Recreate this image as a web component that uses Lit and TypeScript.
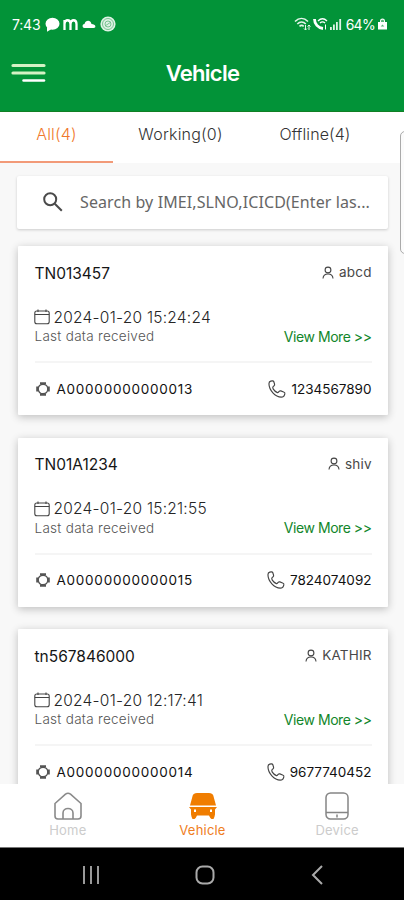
import { LitElement, html, css, svg } from "lit";
import { customElement, property } from "lit/decorators.js";

interface Vehicle {
  plate: string;
  owner: string;
  time: string;
  imei: string;
  phone: string;
}

const vehicles: Vehicle[] = [
  { plate: "TN013457", owner: "abcd", time: "2024-01-20 15:24:24", imei: "A00000000000013", phone: "1234567890" },
  { plate: "TN01A1234", owner: "shiv", time: "2024-01-20 15:21:55", imei: "A00000000000015", phone: "7824074092" },
  { plate: "tn567846000", owner: "KATHIR", time: "2024-01-20 12:17:41", imei: "A00000000000014", phone: "9677740452" },
];

const phonePath = svg`<path d="M2.600 1.100 4 .8c.8-.1 1.300.2 1.500.9l.7 2.200c.2.700 0 1.200-.5 1.600l-.9.8C4.200 7 4.500 7.800 5 8.600c.9 1.400 2 2.400 3.500 3.100.6.300 1 .2 1.400-.3l.6-.7c.5-.5 1-.6 1.600-.4l2.700 1c.9.300 1.300.9 1.100 1.700l-.3 1c-.4 1.400-1.500 2.200-3 2.200C6.800 16 1 9.800 .9 3.600c0-1.300.6-2.200 1.700-2.500z"/>`;

@customElement("vehicle-card")
export class VehicleCard extends LitElement {
  @property({ attribute: false }) vehicle!: Vehicle;

  static styles = css`
    :host {
      display: flex;
      flex-direction: column;
      box-sizing: border-box;
      flex: none;
      height: 169px;
      padding: 15px 16.500px 0 17px;
      background: #fff;
      border-radius: 1px;
      box-shadow: 0 2px 8px rgba(0, 0, 0, 0.24);
      font-family: Inter, "Liberation Sans", sans-serif;
      color: #252525;
      white-space: nowrap;
    }
    svg { fill: none; stroke: #444; stroke-width: 1.1; display: block; flex: none; }
    .row { display: flex; align-items: center; justify-content: space-between; }
    .group { display: flex; align-items: center; }
    .head { height: 24px; }
    .plate { font-size: 15.500px; color: #151515; }
    .owner { font-size: 13.500px; gap: 5px; color: #484848; margin-top: -2px; }
    .owner-name { letter-spacing: 0.2px; margin-right: -0.2px; }
    .when { height: 20px; margin-top: 22px; gap: 4px; font-size: 15.500px; font-weight: 300; }
    .when svg { margin-left: -1px; }
    .time { letter-spacing: 0.240px; }
    .info { height: 20px; margin-top: -1px; }
    .note { font-size: 13.500px; letter-spacing: 0.280px; font-weight: 300; color: #555; }
    .more { font-size: 14px; letter-spacing: -0.450px; color: #12862a; }
    .foot { border-top: 2px solid #f5f5f5; margin-top: 15px; padding-top: 14px; height: 23px; }
    .imei { gap: 6px; font-size: 13.500px; color: #111; }
    .imei svg { margin-right: 0; stroke: #555; }
    .imei-text { letter-spacing: 0.750px; }
    .phone { gap: 5px; font-size: 13.500px; color: #111; }
  `;

  render() {
    const v = this.vehicle;
    return html`
      <div class="row head">
        <span class="plate">${v.plate}</span>
        <span class="group owner">
          <svg width="12" height="13" viewBox="0 0 12 13"><circle cx="6" cy="4" r="2.900"/><path d="M1 12.500C1.200 9.500 3.500 8 6 8s4.800 1.500 5 4.500"/></svg>
          <span class="owner-name">${v.owner}</span>
        </span>
      </div>
      <div class="group when">
        <svg width="16" height="16" viewBox="0 0 16 16"><rect x=".8" y="2" width="14.400" height="12.800" rx="2"/><path d="M.8 5.500h14.400M4 .5V3M12 .5V3"/></svg>
        <span class="time">${v.time}</span>
      </div>
      <div class="row info"><span class="note">Last data received</span><span class="more">View More &gt;&gt;</span></div>
      <div class="row foot">
        <span class="group imei">
          <svg width="16" height="16" viewBox="0 0 16 16"><circle cx="8" cy="8" r="4.800" stroke-width="1.400"/><path stroke-width="2" d="M5 2.300h6M5 13.700h6M2.200 5.500v5M13.800 5.500v5"/></svg>
          <span class="imei-text">${v.imei}</span>
        </span>
        <span class="group phone">
          <svg width="18" height="18" viewBox="0 0 17 17">${phonePath}</svg>
          <span class="phone-text">${v.phone}</span>
        </span>
      </div>`;
  }
}

@customElement("app-root")
export class AppRoot extends LitElement {
  static styles = css`
    :host {
      display: flex;
      flex-direction: column;
      width: 404px;
      height: 900px;
      overflow: hidden;
      position: relative;
      background: #f8f8f8;
      font-family: Inter, "Liberation Sans", sans-serif;
      white-space: nowrap;
    }
    svg { display: block; flex: none; }
    .top { height: 112px; box-sizing: border-box; background: #029338; border-bottom: 1px solid #118024; color: #fff; flex: none; }
    .status { display: flex; align-items: center; justify-content: space-between; height: 24px; padding: 12px 17px 0 12px; font-size: 14px; }
    .left, .right { display: flex; align-items: center; }
    .clock { letter-spacing: -0.2px; margin-right: 2px; }
    .left { gap: 3px; }
    .right { gap: 2px; }
    .battery { letter-spacing: -0.7px; margin-left: 2px; margin-right: 1px; }
    .bar { display: grid; grid-template-columns: 60px 1fr 60px; align-items: center; height: 74px; }
    .menu { margin-left: 11px; }
    .title { margin: 0 0 0 1px; text-align: center; font-size: 22px; font-weight: 600; letter-spacing: -0.7px; }
    .tabs { display: flex; height: 51px; background: #fff; flex: none; font-size: 16px; font-weight: 300; color: #333; }
    .tab { box-sizing: border-box; width: 135px; height: 51px; padding-top: 12px; text-align: center; letter-spacing: 0.2px; }
    .tab:last-child { letter-spacing: 0.1px; width: 134px; }
    .tab.on { width: 113px; border-bottom: 2.500px solid #f29a78; color: #f0782c; }
    .search { display: flex; align-items: center; gap: 16px; box-sizing: border-box; margin: 13px 16px 17px 17px; padding-left: 25px; height: 53px; flex: none; background: #fff; border-radius: 2px; box-shadow: 0 1px 3px rgba(0, 0, 0, 0.18); font: 16px "Noto Sans", sans-serif; color: #666; }
    .query { letter-spacing: 0.1px; margin-top: -1px; }
    .search svg { margin-top: -2px; }
    .list { display: flex; flex-direction: column; gap: 22.600px; flex: 1; min-height: 0; padding: 17px 16px 0 17.500px; margin-top: -17px; overflow: hidden; }
    .nav { display: flex; justify-content: space-around; height: 63px; flex: none; background: #fff; font-size: 13px; color: #ccc; position: relative; }
    .item { display: flex; flex-direction: column; align-items: center; width: 134.600px; padding: 8px 0 0 1px; gap: 2px; letter-spacing: 0.2px; }
    .item.on { color: #ef7d22; }
    .keys { height: 53px; flex: none; background: #000; border-top: 1px solid #777; box-sizing: border-box; display: flex; align-items: center; justify-content: space-between; padding: 2px 80px 0 79px; }
    .round { margin-right: 3px; }
    .handle { position: absolute; left: 400px; top: 131px; width: 12px; height: 121px; border: 1px solid #aaa; border-radius: 5px; background: #fbfbfb; }
  `;

  render() {
    return html`
      <header class="top">
        <div class="status">
          <div class="left">
            <span class="clock">7:43</span>
            <svg width="15" height="15" viewBox="0 0 15 15" fill="#fff"><ellipse cx="7.500" cy="6.800" rx="7" ry="6"/><path d="M2 10v4.800l5-3z"/></svg>
            <svg width="15" height="13" viewBox="0 0 15 13" fill="none" stroke="#fff" stroke-width="2.300"><path d="M1.500 12V2M1.500 6c0-5 6-5 6 0v6M7.500 6c0-5 6-5 6 0v6"/></svg>
            <svg width="16" height="10" viewBox="0 0 14 10" fill="#fff"><path d="M2.500 9A2 2 0 0 1 2.500 5C3.500 1 8.500.5 9.500 5c4.500 0 5 4 2 4z"/></svg>
            <svg width="16" height="16" viewBox="0 0 16 16" fill="#dff2e5"><circle cx="8" cy="8" r="7.600"/><g fill="none" stroke="#6dbd88" stroke-width=".9"><circle cx="8" cy="8" r="5.500"/><circle cx="8" cy="8" r="3"/><path d="m5 10 6-4"/></g></svg>
          </div>
          <div class="right">
            <svg width="17" height="14" viewBox="0 0 17 14" fill="none" stroke="#e5f5ea" stroke-width="1.600"><path d="M1 4.500c4-4 9-4 13 0M3.300 7c2.500-2.500 6-2.500 8.500 0M5.500 9.300c1.500-1.300 2.800-1.300 4.200 0"/><path d="M11.500 8v5M15 8v5M10 11.500l1.500 1.500 1.500-1.500M13.500 9.500 15 8l1.500 1.500" stroke-width="1"/></svg>
            <svg width="15" height="14" viewBox="0 0 15 14" fill="none" stroke="#fff"><path d="M1.500 2C1.500 7 5 11 10 11.500" stroke-width="2.800"/><path d="M5 4c3-3 6-3 9 0M7 6c1.500-1.400 3.500-1.400 5 0" stroke-width="1.300"/><path d="M12.500 7.500v5" stroke-width="1"/></svg>
            <svg width="12" height="12" viewBox="0 0 12 12" fill="#e0f3e6"><path d="M0 9h1.800v3H0zM3 6.500h1.800V12H3zM6 4h1.800v8H6zM9.300 1h1.800v11H9.300z"/></svg>
            <span class="battery">64%</span>
            <svg width="9" height="12" viewBox="0 0 9 12" fill="#fff"><path d="M2 4V3c0-3.300 5-3.300 5 0v1h2v7.500H0V4z"/><path d="M3 4V3c0-1.800 3-1.800 3 0v1zM4.500 6.500 2.700 8.500h3.600z" fill="#5bb57b"/></svg>
          </div>
        </div>
        <div class="bar">
          <svg class="menu" width="36" height="20" viewBox="0 0 36 20" fill="none" stroke="#d4f2c4" stroke-width="3.200" stroke-linecap="round"><path d="M2 2.500h31M2 10h31"/><path d="M12.500 17.500h20.500" stroke="#fff" stroke-width="2.500"/></svg>
          <h1 class="title">Vehicle</h1>
        </div>
      </header>
      <div class="tabs">
        <div class="tab on"><span>All(4)</span></div>
        <div class="tab"><span>Working(0)</span></div>
        <div class="tab"><span>Offline(4)</span></div>
      </div>
      <div class="search">
        <svg width="22" height="22" viewBox="0 0 22 22" fill="none" stroke="#4a4a4a" stroke-width="2"><circle cx="8.200" cy="8.200" r="6"/><path d="m12.800 12.800 7 7"/></svg>
        <span class="query">Search by IMEI,SLNO,ICICD(Enter las...</span>
      </div>
      <main class="list">${vehicles.map((v) => html`<vehicle-card .vehicle=${v}></vehicle-card>`)}</main>
      <nav class="nav">
        <div class="item">
          <svg width="28" height="28" viewBox="0 0 28 28" fill="none" stroke="#8a8a8a" stroke-width="1.600"><path d="M1 11.500 11.500 2.200q2.500-2 5 0L27 11.500V24q0 3-3 3H4q-3 0-3-3z"/><path d="M9 27v-6c0-6 10-6 10 0v6"/></svg>
          <span class="home">Home</span>
        </div>
        <div class="item on">
          <svg width="28" height="28" viewBox="0 0 28 28" fill="#f07d00"><path d="M8 1h12q3.500 0 4.300 2.500L27 13.500H1L3.700 3.500Q4.500 1 8 1zM0 15h28l-2 2.500v5q-.5 3-1.500 4.500h-2q-1.500-1-2.500-3.500H8Q7 26 5.500 27h-2Q2.500 25.500 2 22.500v-5z"/><path d="M5 17.500h2v2.500H5zM21 17.500h2v2.500h-2z" fill="#fff"/></svg>
          <span class="veh">Vehicle</span>
        </div>
        <div class="item">
          <svg width="24" height="28" viewBox="0 0 24 28" fill="none" stroke="#858585" stroke-width="1.500"><rect x="1" y="1" width="22" height="26" rx="4.500"/><path d="M1 20.500h22M12 22.500v3"/></svg>
          <span class="dev">Device</span>
        </div>
      </nav>
      <footer class="keys">
        <svg width="23" height="20" viewBox="0 0 23 20" stroke="#aaa" stroke-width="1.800"><path d="M5 1v18M12 1v18M19 1v18"/></svg>
        <svg class="round" width="20" height="20" viewBox="0 0 20 20" fill="none" stroke="#aaa" stroke-width="2"><rect x="1.500" y="1.500" width="17" height="17" rx="6"/></svg>
        <svg width="14" height="20" viewBox="0 0 14 20" fill="none" stroke="#aaa" stroke-width="2"><path d="m12 1-9 9 9 9"/></svg>
      </footer>
      <div class="handle"></div>`;
  }
}
